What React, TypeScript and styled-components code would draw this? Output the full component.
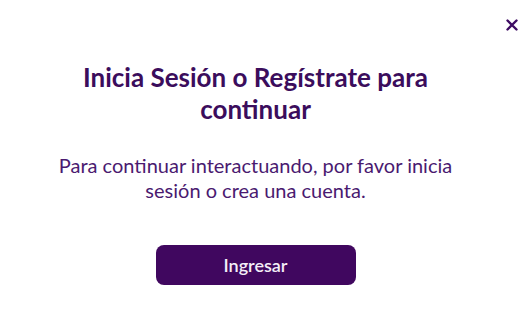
import React from 'react';
import styled, { createGlobalStyle } from 'styled-components';

const GlobalStyle = createGlobalStyle`
    html, body {
        margin: 0;
        padding: 0;
        background: #ffffff;
        font-family: Lato, 'Open Sans', sans-serif;
    }
`;

const Dialog = styled.div`
    width: 522px;
    height: 336px;
    box-sizing: border-box;
    padding: 16px 1px 0 0;
    display: flex;
    flex-direction: column;
    background: #ffffff;
`;

const CloseRow = styled.div`
    display: flex;
    justify-content: flex-end;
    height: 18px;
`;

const CloseButton = styled.button`
    border: none;
    background: none;
    padding: 0;
    width: 18px;
    height: 18px;
    display: flex;
    align-items: center;
    justify-content: center;
    cursor: pointer;
    color: #3e0c63;
`;

const Body = styled.div`
    display: flex;
    flex-direction: column;
    align-items: center;
    text-align: center;
    padding: 0 60px 0 50px;
`;

const Title = styled.h2`
    margin: 27px 0 0;
    font-size: 26px;
    line-height: 32px;
    font-weight: 700;
    color: #3b0d5c;
`;

const Message = styled.p`
    margin: 28px 0 0;
    font-size: 20px;
    line-height: 25px;
    font-weight: 400;
    color: #4a1a70;
`;

const PrimaryButton = styled.button`
    margin-top: 42px;
    width: 200px;
    height: 40px;
    border: none;
    border-radius: 8px;
    background: #40075f;
    color: #f4eef8;
    font-family: Lato, 'Open Sans', sans-serif;
    font-size: 18px;
    font-weight: 600;
    cursor: pointer;
`;

const App: React.FC = () => {
    return (
        <>
            <GlobalStyle />
            <Dialog>
                <CloseRow>
                    <CloseButton aria-label="Cerrar">
                        <svg width="12" height="12" viewBox="0 0 12 12">
                            <path d="M1.5 1.5 L10.5 10.5 M10.5 1.5 L1.5 10.5" stroke="currentColor" strokeWidth="2.4" strokeLinecap="round" />
                        </svg>
                    </CloseButton>
                </CloseRow>
                <Body>
                    <Title>Inicia Sesión o Regístrate para continuar</Title>
                    <Message>Para continuar interactuando, por favor inicia sesión o crea una cuenta.</Message>
                    <PrimaryButton>Ingresar</PrimaryButton>
                </Body>
            </Dialog>
        </>
    );
};

export default App;
